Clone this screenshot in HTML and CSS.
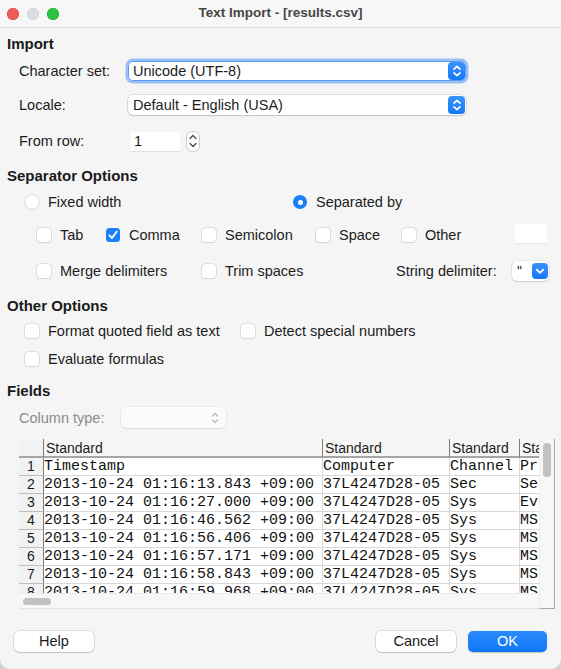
FILE: index.html
```html
<!DOCTYPE html>
<html>
<head>
<meta charset="utf-8">
<title>Text Import</title>
<link rel="stylesheet" href="styles.css">
</head>
<body>
<div class="window">
  <div class="titlebar">
    <div class="lights"><span class="light red"></span><span class="light off"></span><span class="light green"></span></div>
    <div class="title">Text Import - [results.csv]</div>
    <div></div>
  </div>
  <div class="content">
    <div class="heading h-import">Import</div>
    <div class="form-row row-charset">
      <span class="label">Character set:</span>
      <div class="combo focused"><span class="combo-text">Unicode (UTF-8)</span>
        <span class="blue-btn"><svg width="16" height="16" viewBox="0 0 16 16"><path d="M5 6.2 L8 3.4 L11 6.2 M5 9.8 L8 12.6 L11 9.8" fill="none" stroke="#fff" stroke-width="1.7" stroke-linecap="round" stroke-linejoin="round"/></svg></span>
      </div>
    </div>
    <div class="form-row row-locale">
      <span class="label">Locale:</span>
      <div class="combo"><span class="combo-text">Default - English (USA)</span>
        <span class="blue-btn"><svg width="16" height="16" viewBox="0 0 16 16"><path d="M5 6.2 L8 3.4 L11 6.2 M5 9.8 L8 12.6 L11 9.8" fill="none" stroke="#fff" stroke-width="1.7" stroke-linecap="round" stroke-linejoin="round"/></svg></span>
      </div>
    </div>
    <div class="form-row row-fromrow">
      <span class="label">From row:</span>
      <div class="spin">
        <span class="spin-input">1</span>
        <span class="stepper"><svg width="12" height="18" viewBox="0 0 12 18"><path d="M3 6.5 L6 3.5 L9 6.5 M3 11.5 L6 14.5 L9 11.5" fill="none" stroke="#444" stroke-width="1.2" stroke-linecap="round" stroke-linejoin="round"/></svg></span>
      </div>
    </div>

    <div class="heading h-sep">Separator Options</div>
    <div class="row-radio">
      <div class="item"><span class="radio"></span><span>Fixed width</span></div>
      <div class="item"><span class="radio on"></span><span>Separated by</span></div>
    </div>
    <div class="row-checks">
      <div class="item"><span class="cb"></span><span>Tab</span></div>
      <div class="item"><span class="cb on"><svg width="14" height="14" viewBox="0 0 14 14"><path d="M3.4 7.3 L6 10 L10.6 3.8" fill="none" stroke="#fff" stroke-width="1.9" stroke-linecap="round" stroke-linejoin="round"/></svg></span><span>Comma</span></div>
      <div class="item"><span class="cb"></span><span>Semicolon</span></div>
      <div class="item"><span class="cb"></span><span>Space</span></div>
      <div class="item"><span class="cb"></span><span>Other</span></div>
      <span class="other-input"></span>
    </div>
    <div class="row-merge">
      <div class="item"><span class="cb"></span><span>Merge delimiters</span></div>
      <div class="item"><span class="cb"></span><span>Trim spaces</span></div>
      <span class="label">String delimiter:</span>
      <div class="delim"><span class="delim-text">"</span>
        <span class="blue-btn small"><svg width="16" height="16" viewBox="0 0 16 16"><path d="M4.8 6.6 L8 9.8 L11.2 6.6" fill="none" stroke="#fff" stroke-width="1.8" stroke-linecap="round" stroke-linejoin="round"/></svg></span>
      </div>
    </div>

    <div class="heading h-other">Other Options</div>
    <div class="row-format">
      <div class="item"><span class="cb"></span><span>Format quoted field as text</span></div>
      <div class="item"><span class="cb"></span><span>Detect special numbers</span></div>
    </div>
    <div class="row-eval">
      <div class="item"><span class="cb"></span><span>Evaluate formulas</span></div>
    </div>

    <div class="heading h-fields">Fields</div>
    <div class="row-coltype">
      <span class="label disabled">Column type:</span>
      <div class="combo dis-combo">
        <svg width="12" height="16" viewBox="0 0 12 16"><path d="M3.5 6 L6 3.5 L8.5 6 M3.5 10 L6 12.5 L8.5 10" fill="none" stroke="#b5b5b5" stroke-width="1.2" stroke-linecap="round" stroke-linejoin="round"/></svg>
      </div>
    </div>

    <div class="table-box">
      <div class="grid">
        <div class="trow head">
          <div class="rn"></div>
          <div class="hc c1">Standard</div>
          <div class="hc c2">Standard</div>
          <div class="hc c3">Standard</div>
          <div class="hc c4">Sta</div>
        </div>
        <div class="trow">
          <div class="rn">1</div><div class="bc c1">Timestamp</div><div class="bc c2">Computer</div><div class="bc c3">Channel</div><div class="bc c4">Pr</div>
        </div>
        <div class="trow">
          <div class="rn">2</div><div class="bc c1">2013-10-24 01:16:13.843 +09:00</div><div class="bc c2">37L4247D28-05</div><div class="bc c3">Sec</div><div class="bc c4">Se</div>
        </div>
        <div class="trow">
          <div class="rn">3</div><div class="bc c1">2013-10-24 01:16:27.000 +09:00</div><div class="bc c2">37L4247D28-05</div><div class="bc c3">Sys</div><div class="bc c4">Ev</div>
        </div>
        <div class="trow">
          <div class="rn">4</div><div class="bc c1">2013-10-24 01:16:46.562 +09:00</div><div class="bc c2">37L4247D28-05</div><div class="bc c3">Sys</div><div class="bc c4">MS</div>
        </div>
        <div class="trow">
          <div class="rn">5</div><div class="bc c1">2013-10-24 01:16:56.406 +09:00</div><div class="bc c2">37L4247D28-05</div><div class="bc c3">Sys</div><div class="bc c4">MS</div>
        </div>
        <div class="trow">
          <div class="rn">6</div><div class="bc c1">2013-10-24 01:16:57.171 +09:00</div><div class="bc c2">37L4247D28-05</div><div class="bc c3">Sys</div><div class="bc c4">MS</div>
        </div>
        <div class="trow">
          <div class="rn">7</div><div class="bc c1">2013-10-24 01:16:58.843 +09:00</div><div class="bc c2">37L4247D28-05</div><div class="bc c3">Sys</div><div class="bc c4">MS</div>
        </div>
        <div class="trow">
          <div class="rn">8</div><div class="bc c1">2013-10-24 01:16:59.968 +09:00</div><div class="bc c2">37L4247D28-05</div><div class="bc c3">Sys</div><div class="bc c4">MS</div>
        </div>
      </div>
      <div class="vscroll"><span class="vthumb"></span></div>
      <div class="hscroll"><span class="hthumb"></span></div>
    </div>

    <div class="buttons">
      <span class="btn">Help</span>
      <span class="spacer"></span>
      <span class="btn">Cancel</span>
      <span class="btn primary">OK</span>
    </div>
  </div>
</div>
</body>
</html>
```
FILE: styles.css
```css
* { box-sizing: border-box; }
html, body { margin: 0; padding: 0; }
body {
  background: #d2d2d2;
  font-family: "Liberation Sans", Arial, sans-serif;
  font-size: 14.5px;
  color: #1c1c1c;
}
.window {
  width: 561px;
  height: 669px;
  background: #f5f5f5;
  border-radius: 0 0 10px 10px;
  overflow: hidden;
  display: flex;
  flex-direction: column;
}
.titlebar {
  height: 28px;
  flex: none;
  background: #f7f7f7;
  border-bottom: 1px solid #dcdcdc;
  display: grid;
  grid-template-columns: 1fr auto 1fr;
  align-items: center;
}
.lights { display: flex; gap: 8px; padding-left: 7px; }
.light { width: 12px; height: 12px; border-radius: 50%; }
.light.red { background: #ee5d55; box-shadow: inset 0 0 0 0.5px #d5463f; }
.light.off { background: #dcdcdc; box-shadow: inset 0 0 0 0.5px #cacaca; }
.light.green { background: #2dc23f; box-shadow: inset 0 0 0 0.5px #20a72f; }
.title {
  font-size: 13.5px;
  font-weight: bold;
  color: #464646;
  line-height: 16px;
  padding-bottom: 1px;
}
.content {
  padding-top: 7px;
  display: flex;
  flex-direction: column;
}
.heading {
  margin-left: 7px;
  font-weight: bold;
  font-size: 15px;
  line-height: 18px;
  height: 18px;
  color: #1a1a1a;
}
.h-sep { margin-top: 16px; }
.h-other { margin-top: 16px; }
.h-fields { margin-top: 14px; }

.item { display: flex; align-items: center; gap: 9px; line-height: 18px; white-space: nowrap; }
.label { line-height: 18px; white-space: nowrap; }
.label.disabled { color: #8c8c8c; }

.form-row {
  display: grid;
  grid-template-columns: 109px 338px;
  align-items: center;
  padding-left: 19px;
  height: 20px;
}
.row-charset { margin-top: 8px; }
.row-locale { margin-top: 14px; }
.row-fromrow { margin-top: 16px; }

.combo {
  height: 20px;
  background: #fff;
  border-radius: 5px;
  box-shadow: 0 0 0 0.5px rgba(0,0,0,0.18), 0 1px 1.5px rgba(0,0,0,0.12);
  display: flex;
  align-items: center;
  justify-content: space-between;
  padding-left: 5px;
  padding-right: 1px;
}
.combo.focused {
  box-shadow: inset 0 0 0 1px #5b9cf3, 0 0 0 2.5px rgba(74,146,245,0.55);
}
.combo-text { line-height: 18px; }
.blue-btn {
  width: 17px;
  height: 18px;
  border-radius: 4px;
  background: linear-gradient(#3a93fb, #1479f6);
  display: flex;
  align-items: center;
  justify-content: center;
}
.blue-btn.small { width: 16px; height: 16px; }

.spin { display: flex; align-items: center; margin-left: 3px; }
.spin-input {
  width: 49px;
  height: 19px;
  background: #fff;
  box-shadow: 0 0.5px 0 rgba(0,0,0,0.18);
  padding-left: 3px;
  line-height: 19px;
}
.stepper {
  margin-left: 7px;
  width: 12px;
  height: 19px;
  border-radius: 5px;
  background: #fff;
  box-shadow: 0 0 0 0.8px #c4c4c4;
  display: flex;
  align-items: center;
  justify-content: center;
}

.row-radio {
  margin-top: 8px;
  height: 18px;
  padding-left: 25px;
  display: grid;
  grid-template-columns: 268px auto;
  align-items: center;
}
.radio {
  width: 14px;
  height: 14px;
  border-radius: 50%;
  background: #fff;
  box-shadow: 0 0 0 0.6px #cdcdcd, 0 0.5px 1px rgba(0,0,0,0.1);
  display: flex;
  align-items: center;
  justify-content: center;
}
.radio.on { background: #1a80fa; box-shadow: none; }
.radio.on::after {
  content: "";
  width: 5px;
  height: 5px;
  border-radius: 50%;
  background: #fff;
}

.cb {
  width: 14px;
  height: 14px;
  border-radius: 3.5px;
  background: #fff;
  box-shadow: 0 0 0 0.6px #cdcdcd, 0 0.5px 1px rgba(0,0,0,0.1);
  flex: none;
  display: flex;
  align-items: center;
  justify-content: center;
}
.cb.on { background: #1a80fa; box-shadow: none; }

.row-checks {
  margin-top: 15px;
  height: 18px;
  padding-left: 37px;
  display: grid;
  grid-template-columns: 69px 96px 114px 86px 113px 32px;
  align-items: center;
}
.other-input {
  width: 32px;
  height: 19px;
  background: #fff;
  box-shadow: 0 0.5px 0 rgba(0,0,0,0.12);
  margin-top: -3px;
}
.row-merge {
  margin-top: 17px;
  height: 20px;
  padding-left: 37px;
  display: grid;
  grid-template-columns: 165px 194px 116px 37px;
  align-items: center;
}
.delim {
  width: 37px;
  height: 20px;
  background: #fff;
  border-radius: 5px;
  box-shadow: 0 0 0 0.5px rgba(0,0,0,0.1), 0 1px 1.5px rgba(0,0,0,0.12);
  display: flex;
  align-items: center;
  justify-content: space-between;
  padding-left: 5px;
  padding-right: 1px;
}
.delim-text { font-size: 14px; line-height: 18px; }

.row-format {
  margin-top: 7px;
  height: 18px;
  padding-left: 25px;
  display: grid;
  grid-template-columns: 216px auto;
  align-items: center;
}
.row-eval {
  margin-top: 10px;
  height: 18px;
  padding-left: 25px;
  display: flex;
  align-items: center;
}
.row-coltype {
  margin-top: 7px;
  height: 21px;
  padding-left: 19px;
  display: grid;
  grid-template-columns: 102px 105px;
  align-items: center;
}
.dis-combo {
  height: 21px;
  background: #fbfbfb;
  box-shadow: 0 0 0 0.5px rgba(0,0,0,0.08), 0 0.5px 1px rgba(0,0,0,0.06);
  justify-content: flex-end;
  padding-right: 5px;
}

.table-box {
  margin-top: 11px;
  margin-left: 19px;
  width: 536px;
  height: 170px;
  display: grid;
  grid-template-columns: 520px 16px;
  grid-template-rows: 154px 16px;
}
.grid {
  grid-column: 1;
  grid-row: 1;
  overflow: hidden;
  background: #fff;
}
.trow { display: flex; width: max-content; height: 18px; }
.trow.head { height: 19px; }
.rn {
  width: 25px;
  flex: none;
  background: #f2f2f2;
  border-right: 1px solid #7b7b7b;
  border-bottom: 1px solid #bdbdbd;
  text-align: center;
  font-size: 14px;
  line-height: 17px;
  color: #1a1a1a;
}
.head .rn { border-bottom: 2px solid #a6a6a6; }
.c1 { width: 279px; }
.c2 { width: 127px; }
.c3 { width: 70px; }
.c4 { width: 19px; border-right: none !important; }
.hc {
  flex: none;
  background: #f6f6f6;
  border-right: 1px solid #7b7b7b;
  border-bottom: 2px solid #a6a6a6;
  font-size: 14px;
  line-height: 15px;
  padding-top: 2px;
  padding-left: 2px;
  white-space: nowrap;
  overflow: hidden;
}
.bc {
  flex: none;
  border-right: 1px solid #d9d9d9;
  border-bottom: 1px solid #d9d9d9;
  font-family: "Liberation Mono", "Courier New", monospace;
  font-size: 15px;
  line-height: 17px;
  white-space: pre;
  overflow: hidden;
  color: #111;
}
.vscroll {
  grid-column: 2;
  grid-row: 1 / span 2;
  background: #f7f7f7;
  border-right: 1px solid #a9a9a9;
  border-bottom: 1px solid #a9a9a9;
  border-left: 1px solid #ececec;
  padding: 4px 0 0 3px;
}
.vthumb {
  display: block;
  width: 8px;
  height: 34px;
  border-radius: 4px;
  background: #c2c2c2;
}
.hscroll {
  grid-column: 1;
  grid-row: 2;
  background: #f7f7f7;
  border-top: 1px solid #ececec;
  border-bottom: 1px solid #e4e4e4;
  padding: 4px 0 0 4px;
}
.hthumb {
  display: block;
  width: 28px;
  height: 7px;
  border-radius: 4px;
  background: #c2c2c2;
}

.buttons {
  margin-top: 22px;
  height: 21px;
  padding: 0 14px;
  display: flex;
  align-items: center;
  gap: 12px;
}
.spacer { flex: 1; }
.btn {
  width: 80px;
  height: 21px;
  border-radius: 5px;
  background: #fff;
  box-shadow: 0 0 0 0.5px rgba(0,0,0,0.2), 0 1px 1px rgba(0,0,0,0.12);
  text-align: center;
  line-height: 21px;
  font-size: 14.5px;
  color: #1a1a1a;
}
.btn.primary {
  width: 79px;
  background: linear-gradient(#2a8bfb, #0f78f6);
  color: #fff;
  box-shadow: 0 0.5px 1px rgba(0,0,0,0.2);
}
```
